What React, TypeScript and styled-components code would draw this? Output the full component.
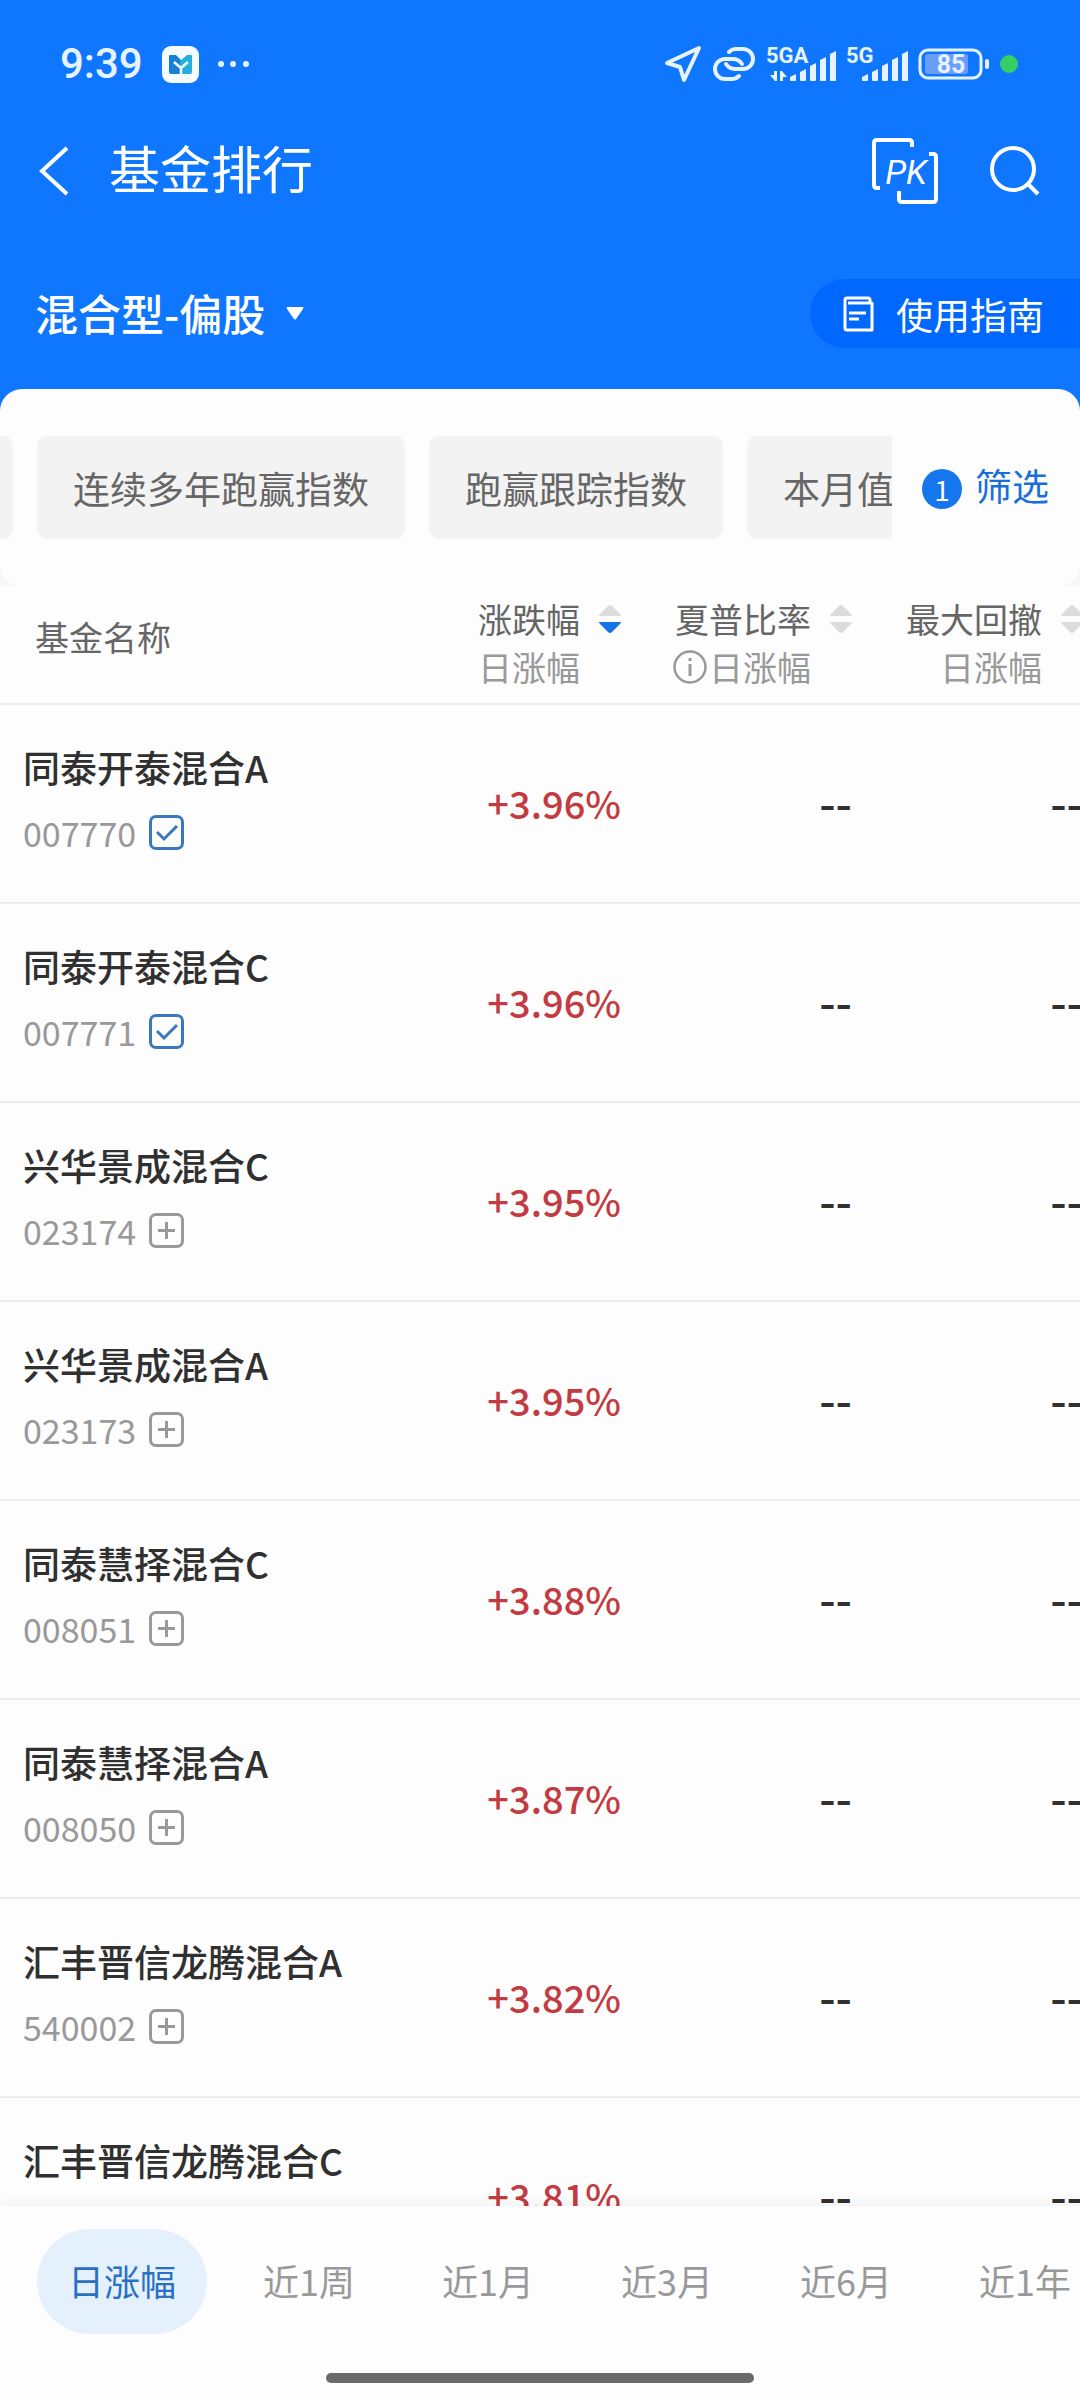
import { useState } from 'react';
import styled, { createGlobalStyle } from 'styled-components';

const GlobalStyle = createGlobalStyle`
  * {
    box-sizing: border-box;
  }

  body {
    margin: 0;
    background: #fdfdfe;
    font-family: 'Noto Sans CJK SC', sans-serif;
    color: #303030;
  }

  button, select, input {
    margin: 0;
    padding: 0;
    border: 0;
    background: none;
    font: inherit;
    color: inherit;
  }

  svg {
    display: block;
    flex: none;
    overflow: visible;
  }
`;

const Screen = styled.div`
  display: flex;
  flex-direction: column;
  height: 100vh;
  overflow: hidden;
`;

const Header = styled.header`
  flex: none;
  background: #0e76ff;
  color: #fff;
`;

const StatusBar = styled.div`
  display: flex;
  align-items: center;
  justify-content: space-between;
  height: 128px;
  padding: 0 62px 0 60px;
`;

const StatusGroup = styled.div<{ $gap: number }>`
  display: flex;
  align-items: center;
  gap: ${({ $gap }) => $gap}px;
`;

const Clock = styled.span`
  color: #e6f3ff;
  font-family: Roboto, sans-serif;
  font-size: 42px;
  font-weight: 500;
  line-height: 48px;
`;

const TitleBar = styled.div`
  display: flex;
  align-items: center;
  height: 86px;
  padding: 0 41px 0 38px;
`;

const IconButton = styled.button`
  display: flex;
`;

const Title = styled.h1`
  flex: 1;
  margin: 0;
  padding: 0 0 8px 39px;
  font-size: 51px;
  font-weight: 400;
  line-height: 72px;
`;

const TitleActions = styled.div`
  display: flex;
  align-items: center;
  gap: 52px;
`;

const CategoryBar = styled.div`
  display: flex;
  align-items: center;
  justify-content: space-between;
  height: 175px;
  padding-top: 24px;
`;

const CategoryPicker = styled.label`
  display: flex;
  align-items: center;
  gap: 20px;
  padding-left: 35px;
`;

const CategorySelect = styled.select`
  appearance: none;
  padding-bottom: 4px;
  font-size: 43px;
  font-weight: 500;
  line-height: 64px;
`;

const GuideLink = styled.a`
  display: flex;
  align-items: center;
  gap: 22px;
  height: 69px;
  padding: 0 36px 0 33px;
  border-radius: 35px 0 0 35px;
  background: #0068fe;
  color: #fff;
  font-size: 37px;
  text-decoration: none;
`;

const SheetBackdrop = styled.div`
  flex: none;
  background: linear-gradient(#0e76ff 50%, #f7f7f8 50%);
`;

const Sheet = styled.div`
  display: flex;
  align-items: center;
  height: 197px;
  border-radius: 22px;
  background: #fdfdfe;
`;

const ChipScroller = styled.div`
  flex: 1;
  display: flex;
  gap: 24px;
  min-width: 0;
  overflow: hidden;
`;

const Chip = styled.button`
  flex: none;
  height: 103px;
  padding: 0 36px;
  border-radius: 10px;
  background: #f3f3f3;
  color: #666;
  font-size: 37px;
  white-space: nowrap;
`;

// the tail of the chip that is scrolled off to the left
const ChipTail = styled.span`
  flex: none;
  width: 13px;
  height: 103px;
  border-radius: 0 10px 10px 0;
  background: #f3f3f3;
`;

const FilterButton = styled.button`
  flex: none;
  display: flex;
  align-items: flex-end;
  gap: 13px;
  padding: 0 31px 6px 30px;
  color: #1a6fd6;
  font-size: 37px;
  line-height: 48px;
`;

const FilterCount = styled.span`
  width: 40px;
  height: 40px;
  border-radius: 50%;
  background: #1576ee;
  color: #fff;
  font-size: 28px;
  line-height: 40px;
  text-align: center;
`;

const TableArea = styled.main`
  flex: 1;
  min-height: 0;
  overflow: hidden;
`;

const FundTable = styled.table`
  width: 100%;
  min-width: 1083px;
  table-layout: fixed;
  border-collapse: separate;
  border-spacing: 0;
`;

const NameHead = styled.th`
  height: 119px;
  padding: 0 0 16px 35px;
  border-bottom: 2px solid #ededee;
  color: #666;
  font-size: 34px;
  font-weight: 400;
  text-align: left;
`;

const MetricHead = styled.th`
  width: 231px;
  padding: 0 0 4px;
  border-bottom: 2px solid #ededee;
  font-weight: 400;
`;

const SortButton = styled.button`
  display: flex;
  justify-content: flex-end;
  gap: 19px;
  width: 100%;
  font-size: 34px;
  line-height: 48px;
  white-space: nowrap;
`;

const MetricLabel = styled.span`
  display: flex;
  flex-direction: column;
  align-items: flex-end;
  color: #666;
`;

const MetricPeriod = styled.span`
  display: flex;
  align-items: center;
  gap: 2px;
  color: #999;
`;

const SortIcon = styled.svg`
  margin-top: 10px;
`;

const NameCell = styled.td`
  height: 199px;
  padding: 0 0 8px 23px;
  border-bottom: 2px solid #ededee;
`;

const FundName = styled.div`
  font-size: 37px;
  font-weight: 500;
  line-height: 56px;
  white-space: nowrap;
`;

const CodeLine = styled.div`
  display: flex;
  align-items: center;
  gap: 13px;
  height: 56px;
  margin-top: 10px;
  color: #999;
  font-size: 34px;
  line-height: 56px;
`;

const ValueCell = styled.td<{ $rise?: boolean }>`
  padding: 0 0 ${({ $rise }) => ($rise ? 2 : 6)}px;
  border-bottom: 2px solid #ededee;
  color: ${({ $rise }) => ($rise ? '#c33b40' : '#303030')};
  font-size: ${({ $rise }) => ($rise ? 38 : 46)}px;
  font-weight: 500;
  line-height: 56px;
  text-align: right;
`;

const WatchToggle = styled.label`
  display: grid;
  place-items: center;

  > * {
    grid-area: 1 / 1;
  }
`;

const WatchBox = styled.input`
  appearance: none;
  width: 35px;
  height: 35px;
  border: 3px solid #999;
  border-radius: 7px;

  &:checked {
    border-color: #3a78bd;
  }
`;

const BottomBar = styled.footer`
  flex: none;
  position: relative;
  padding: 23px 0 17px;
  background: #fdfdfe;
  box-shadow: 0 -4px 14px rgba(0, 0, 0, 0.05);
`;

const PeriodTabs = styled.nav`
  display: flex;
  gap: 25px;
  padding-left: 37px;
  overflow: hidden;
`;

const PeriodTab = styled.button<{ $active: boolean }>`
  flex: none;
  height: 105px;
  padding: 0 31px 4px;
  border-radius: 53px;
  background: ${({ $active }) => ($active ? '#e5f0fd' : 'transparent')};
  color: ${({ $active }) => ($active ? '#2a70c4' : '#999')};
  font-size: 36px;
`;

const HomeIndicator = styled.div`
  width: 428px;
  height: 10px;
  margin: 39px auto 0;
  border-radius: 5px;
  background: #6a6a6a;
`;

const NetworkText = styled.text`
  font-family: Roboto, sans-serif;
  font-weight: 700;
  fill: #e6f3ff;
`;

const PkText = styled.text`
  font-family: Roboto, sans-serif;
  font-style: italic;
  fill: #fff;
`;

const funds = [
  { name: '同泰开泰混合A', code: '007770', change: '+3.96%', watched: true },
  { name: '同泰开泰混合C', code: '007771', change: '+3.96%', watched: true },
  { name: '兴华景成混合C', code: '023174', change: '+3.95%', watched: false },
  { name: '兴华景成混合A', code: '023173', change: '+3.95%', watched: false },
  { name: '同泰慧择混合C', code: '008051', change: '+3.88%', watched: false },
  { name: '同泰慧择混合A', code: '008050', change: '+3.87%', watched: false },
  { name: '汇丰晋信龙腾混合A', code: '540002', change: '+3.82%', watched: false },
  { name: '汇丰晋信龙腾混合C', code: '', change: '+3.81%', watched: false }
];

const metrics = [
  { label: '涨跌幅', info: false },
  { label: '夏普比率', info: true },
  { label: '最大回撤', info: false }
];

const chips = ['连续多年跑赢指数', '跑赢跟踪指数', '本月值'];

const periods = ['日涨幅', '近1周', '近1月', '近3月', '近6月', '近1年'];

const AppBadge = () => (
  <svg width="37" height="37" viewBox="0 0 37 37">
    <rect width="37" height="37" rx="9" fill="#f4fcff" />
    <path d="M7 10q0-1 1-1h6l5 5-1 14H9q-2 0-2-2z" fill="#1b7fd6" />
    <path d="M18 15l7-6h4q1 0 1 1v16q0 2-2 2h-9z" fill="#25b0dc" />
    <path d="M12 16l7 6 7-6M19 21v8" fill="none" stroke="#f4fcff" strokeWidth="2.5" />
  </svg>
);

const MoreDots = () => (
  <svg width="32" height="8" viewBox="0 0 32 8" fill="#e6f3ff">
    <circle cx="3" cy="4" r="3" />
    <circle cx="15" cy="4" r="3" />
    <circle cx="28" cy="4" r="3" />
  </svg>
);

const LocationIcon = () => (
  <svg width="38" height="38" viewBox="0 0 38 38">
    <path
      d="M35 3L3 18l13 4 4 13z"
      fill="none"
      stroke="#e6f3ff"
      strokeWidth="4"
      strokeLinejoin="round"
    />
  </svg>
);

const LinkIcon = () => (
  <svg width="44" height="34" viewBox="0 0 44 34" fill="none" stroke="#e6f3ff" strokeWidth="4" strokeLinecap="round">
    <path d="M17 5c2-2 4-3 6-3h8a10 10 0 0 1 0 20h-8c-4 0-7-2-9-5" />
    <path d="M27 29c-2 2-4 3-6 3h-8a10 10 0 0 1 0-20h8c4 0 7 2 9 5" />
  </svg>
);

const bars = [7, 12, 18, 24, 30];

const Signal = ({ label, offset, transfer }: { label: string; offset: number; transfer?: boolean }) => (
  <svg width={offset + 46} height="35" viewBox={`0 0 ${offset + 46} 35`} fill="#e6f3ff">
    <NetworkText x="0" y="16" fontSize="22">{label}</NetworkText>
    {bars.map((height, i) => (
      <path
        key={height}
        d={`M${offset + i * 10} ${37 - height}l6-3v${height - 1}q0 1-1 1h-4q-1 0-1-1z`}
      />
    ))}
    {transfer && <path d="M11 24v10h-2l-5-6h4v-4zM14 34v-10h2l5 6h-4v4z" />}
  </svg>
);

const Battery = () => (
  <svg width="72" height="32" viewBox="0 0 72 32">
    <rect x="2" y="2" width="61" height="28" rx="8" fill="none" stroke="#e6f3ff" strokeWidth="3" />
    <rect x="7" y="6" width="43" height="20" rx="3" fill="#6b9dff" />
    <rect x="67" y="11" width="4" height="10" rx="2" fill="#e6f3ff" />
    <NetworkText x="33" y="25" fontSize="25" textAnchor="middle">85</NetworkText>
  </svg>
);

const RecordingDot = () => (
  <svg width="18" height="18" viewBox="0 0 18 18">
    <circle cx="9" cy="9" r="9" fill="#35d063" />
  </svg>
);

const BackIcon = () => (
  <svg width="32" height="50" viewBox="0 0 32 50">
    <path d="M29 2L4 25l25 23" fill="none" stroke="#fff" strokeWidth="4" />
  </svg>
);

const PkIcon = () => (
  <svg width="66" height="66" viewBox="0 0 66 66">
    <g fill="none" stroke="#fff" strokeWidth="4" strokeLinejoin="round">
      <path d="M8 50H5q-3 0-3-3V5q0-3 3-3h32q3 0 3 3v4" />
      <path d="M57 16h4q3 0 3 3v42q0 3-3 3H30q-3 0-3-3v-8" />
    </g>
    <PkText x="34" y="46" fontSize="34" textAnchor="middle">PK</PkText>
  </svg>
);

const SearchIcon = () => (
  <svg width="49" height="50" viewBox="0 0 49 50" fill="none" stroke="#fff" strokeWidth="4">
    <circle cx="23" cy="23" r="21" />
    <path d="M38 38l10 10" />
  </svg>
);

const GuideIcon = () => (
  <svg width="31" height="36" viewBox="0 0 31 36" fill="none" stroke="#fff" strokeWidth="3">
    <path d="M27 7V4q0-2-2-2H4Q2 2 2 4v28q0 2 2 2h25V7H5" strokeLinejoin="round" />
    <path d="M6 17h17M6 23h10" />
  </svg>
);

const InfoIcon = () => (
  <svg width="34" height="34" viewBox="0 0 34 34">
    <circle cx="17" cy="17" r="15.5" fill="none" stroke="#999" strokeWidth="2.5" />
    <path d="M15.5 8h3v3h-3zM15.5 14h3v12h-3z" fill="#999" />
  </svg>
);

const SortArrows = ({ active }: { active: boolean }) => (
  <SortIcon width="22" height="28" viewBox="0 0 22 28">
    <path d="M0 11q0-1 1-2L9 1q2-2 4 0l8 8q1 1 1 2z" fill="#dcdcdc" />
    <path d="M0 17h22q0 1-1 2l-8 8q-2 2-4 0l-8-8q-1-1-1-2z" fill={active ? '#1673e8' : '#dcdcdc'} />
  </SortIcon>
);

const WatchMark = ({ checked }: { checked: boolean }) => (
  <svg width="35" height="35" viewBox="0 0 35 35" fill="none" strokeWidth="3" pointerEvents="none">
    {checked ? (
      <path d="M8 17l7 7 13-13" stroke="#3a78bd" />
    ) : (
      <path d="M9 17.5h17M17.5 9v17" stroke="#999" />
    )}
  </svg>
);

const App = () => {
  const [period, setPeriod] = useState('日涨幅');
  const [sortBy, setSortBy] = useState('涨跌幅');
  const [watched, setWatched] = useState(
    funds.filter(fund => fund.watched).map(fund => fund.name)
  );

  const toggleWatched = (name: string) => {
    setWatched(names =>
      names.includes(name) ? names.filter(item => item !== name) : [...names, name]
    );
  };

  return (
    <>
      <GlobalStyle />
      <Screen>
        <Header>
          <StatusBar>
            <StatusGroup $gap={19}>
              <Clock>9:39</Clock>
              <AppBadge />
              <MoreDots />
            </StatusGroup>
            <StatusGroup $gap={10}>
              <LocationIcon />
              <LinkIcon />
              <Signal label="5GA" offset={24} transfer />
              <Signal label="5G" offset={16} />
              <Battery />
              <RecordingDot />
            </StatusGroup>
          </StatusBar>

          <TitleBar>
            <IconButton aria-label="返回">
              <BackIcon />
            </IconButton>
            <Title>基金排行</Title>
            <TitleActions>
              <IconButton aria-label="基金对比">
                <PkIcon />
              </IconButton>
              <IconButton aria-label="搜索">
                <SearchIcon />
              </IconButton>
            </TitleActions>
          </TitleBar>

          <CategoryBar>
            <CategoryPicker>
              <CategorySelect aria-label="基金类型">
                <option>混合型-偏股</option>
              </CategorySelect>
              <svg width="18" height="13" viewBox="0 0 18 13">
                <path d="M1 0h16q1 1 0 2l-7 10q-1 1-2 0L1 2q-1-1 0-2z" fill="#fff" />
              </svg>
            </CategoryPicker>
            <GuideLink href="#guide">
              <GuideIcon />
              使用指南
            </GuideLink>
          </CategoryBar>
        </Header>

        <SheetBackdrop>
          <Sheet>
            <ChipScroller>
              <ChipTail />
              {chips.map(chip => (
                <Chip key={chip}>{chip}</Chip>
              ))}
            </ChipScroller>
            <FilterButton>
              <FilterCount>1</FilterCount>
              筛选
            </FilterButton>
          </Sheet>
        </SheetBackdrop>

        <TableArea>
          <FundTable>
            <thead>
              <tr>
                <NameHead>基金名称</NameHead>
                {metrics.map(metric => (
                  <MetricHead key={metric.label}>
                    <SortButton onClick={() => setSortBy(metric.label)}>
                      <MetricLabel>
                        {metric.label}
                        <MetricPeriod>
                          {metric.info && <InfoIcon />}
                          {period}
                        </MetricPeriod>
                      </MetricLabel>
                      <SortArrows active={sortBy === metric.label} />
                    </SortButton>
                  </MetricHead>
                ))}
              </tr>
            </thead>
            <tbody>
              {funds.map(fund => (
                <tr key={fund.name}>
                  <NameCell>
                    <FundName>{fund.name}</FundName>
                    <CodeLine>
                      {fund.code}
                      <WatchToggle>
                        <WatchBox
                          type="checkbox"
                          aria-label={`自选 ${fund.name}`}
                          checked={watched.includes(fund.name)}
                          onChange={() => toggleWatched(fund.name)}
                        />
                        <WatchMark checked={watched.includes(fund.name)} />
                      </WatchToggle>
                    </CodeLine>
                  </NameCell>
                  <ValueCell $rise>{fund.change}</ValueCell>
                  <ValueCell>--</ValueCell>
                  <ValueCell>--</ValueCell>
                </tr>
              ))}
            </tbody>
          </FundTable>
        </TableArea>

        <BottomBar>
          <PeriodTabs>
            {periods.map(item => (
              <PeriodTab key={item} $active={item === period} onClick={() => setPeriod(item)}>
                {item}
              </PeriodTab>
            ))}
          </PeriodTabs>
          <HomeIndicator />
        </BottomBar>
      </Screen>
    </>
  );
};

export default App;
